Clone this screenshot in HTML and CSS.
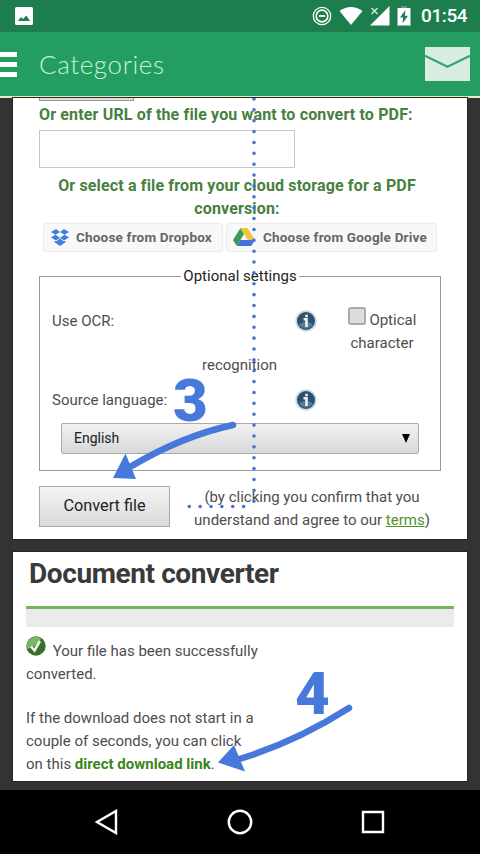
FILE: index.html
```
<!DOCTYPE html>
<html lang="en">
  <head>
    <meta charset="UTF-8" />
    <meta name="viewport" content="width=device-width, initial-scale=1.0" />
    <title>Categories</title>
    <link rel="stylesheet" href="styles.css">
  </head>
  <body>
    <div class="status">
      <svg class="pic" width="18" height="18" viewBox="0 0 18 18">
        <rect width="18" height="18" rx="1.5" fill="#fff" />
        <path d="M3 14l3-4 2.2 2 3-3.500 4 5.500z" fill="#1d7d4d" />
      </svg>
      <div class="status-icons">
        <svg width="20" height="20" viewBox="0 0 20 20" fill="none" stroke="#fff">
          <circle cx="10" cy="10" r="8.700" stroke-width="1.300" />
          <circle cx="10" cy="10" r="5.800" stroke-width="1.700" />
          <path d="M7 10h6" stroke-width="1.900" />
        </svg>
        <svg width="24" height="20" viewBox="0 0 24 20">
          <path d="M.5 5Q12-3 23.500 5L12 19z" fill="#fff" />
        </svg>
        <svg width="20" height="20" viewBox="0 0 20 20">
          <path d="M19.500 0v19.500H0z" fill="#fff" />
          <path d="M0-1h9.500v10H0z" fill="#1d7d4d" />
          <path d="M1.500 2l6 6M7.500 2l-6 6" stroke="#d5e8dd" stroke-width="1.400" />
        </svg>
        <svg width="14" height="20" viewBox="0 0 14 20">
          <path d="M4 0h6v2h-6z" fill="#5ba27d" />
          <path d="M.5 2h13v17.500H.5z" fill="#fff" />
          <path d="M8.500 4L3 11.500h3.200L5.500 17.500 11 9.800H7.800z" fill="#1d7d4d" />
        </svg>
        <span class="clock">01:54</span>
      </div>
    </div>

    <div class="header">
      <div class="menu"><i></i><i></i><i></i></div>
      <h1>Categories</h1>
      <svg class="mail" width="45" height="34" viewBox="0 0 45 34">
        <path d="M0 0h45v34H0z" fill="#d7ede2" />
        <path d="M0 8.800l22.500 11L45 8.800" fill="none" stroke="#3fa170" stroke-width="2.200" />
      </svg>
    </div>

    <div class="content">
      <div class="card upload">
        <div class="browse"></div>
        <p class="label url">Or enter URL of the file you want to convert to PDF:</p>
        <input class="input" type="text" />
        <p class="label cloud">Or select a file from your cloud storage for a PDF<br>conversion:</p>
        <div class="choosers">
          <div class="choose dropbox">
            <svg width="18" height="17" viewBox="0 0 18 17" fill="#3f7fe0">
              <path d="M5 0l4 3-4.500 2.800L0 3zM13 0l5 3-4.500 2.800L9 3zM4.500 5.800L9 8.700 5 11.500 0 8.500zM13.500 5.800L18 8.500l-5 3-4-2.800zM9 9.600l4 2.900 1.500-.8v1.600L9 17l-5.500-3.700v-1.600l1.500.8z" />
            </svg>
            <span>Choose from Dropbox</span>
          </div>
          <div class="choose drive">
            <svg width="22" height="18" viewBox="0 0 22 18">
              <path d="M7.500 0L0 12l3.800 6L11 6z" fill="#3e9b55" />
              <path d="M7.500 0h7L22 12h-7.300z" fill="#eec63c" />
              <path d="M7.300 12H22l-3.800 6H3.800z" fill="#4175dc" />
            </svg>
            <span>Choose from Google Drive</span>
          </div>
        </div>

        <fieldset>
          <legend>Optional settings</legend>
          <div class="row ocr">
            <span class="name">Use OCR:</span>
            <svg class="info" width="22" height="22" viewBox="0 0 22 22">
              <circle cx="11" cy="11" r="10.700" fill="#c9d8e2" />
              <circle cx="11" cy="11" r="9" fill="#2f506c" />
              <path d="M4 14.500a8 8 0 0 0 14 0 10 10 0 0 0-14 0z" fill="#557b98" />
              <path d="M8.500 9.300h3V17M11.500 4.800v2.500" fill="none" stroke="#e8f2f8" stroke-width="2.600" />
            </svg>
            <div class="check"><i class="box"></i> Optical<br>character</div>
          </div>
          <p class="recog">recognition</p>
          <div class="row lang">
            <span class="name">Source language:</span>
            <svg class="info" width="22" height="22" viewBox="0 0 22 22">
              <circle cx="11" cy="11" r="10.700" fill="#c9d8e2" />
              <circle cx="11" cy="11" r="9" fill="#2f506c" />
              <path d="M4 14.500a8 8 0 0 0 14 0 10 10 0 0 0-14 0z" fill="#557b98" />
              <path d="M8.500 9.300h3V17M11.500 4.800v2.500" fill="none" stroke="#e8f2f8" stroke-width="2.600" />
            </svg>
          </div>
          <div class="select">
            <span>English</span>
            <svg width="8" height="9" viewBox="0 0 8 9"><path d="M0 0h8L4 9z" /></svg>
          </div>
        </fieldset>

        <div class="submit">
          <button class="btn">Convert file</button>
          <p>(by clicking you confirm that you<br>understand and agree to our <a>terms</a>)</p>
        </div>

        <!-- step 3 marks drawn over the form -->
        <svg class="marks" width="454" height="441" viewBox="13 98 454 441">
          <path class="dots" d="M254 99V507" />
          <path class="dots" d="M189.300 506.500H250" />
          <path class="line" d="M233 425Q182 436 130 467" />
          <path class="head" d="M125.500 453.500L136 479l-23-1z" />
        </svg>
        <b class="step three">3</b>
      </div>

      <div class="card result">
        <h2>Document converter</h2>
        <div class="bar"></div>
        <p class="done">
          <svg width="20" height="20" viewBox="0 0 20 20">
            <circle cx="10" cy="10" r="9.700" fill="#376f2c" />
            <path d="M1.500 13A9 9 0 0 1 15 2.500Q12 10 1.500 13z" fill="#7cb664" />
            <path d="M5 10.500l3.500 4L14 5" fill="none" stroke="#edf5e8" stroke-width="2.600" />
          </svg>
          Your file has been successfully<br>converted.
        </p>
        <p class="download">If the download does not start in a<br>couple of seconds, you can click<br>on this <a>direct download link</a>.</p>

        <!-- step 4 marks -->
        <svg class="marks" width="454" height="229" viewBox="13 552 454 229">
          <path class="line" d="M349 708Q294 743 236 760" />
          <path class="head" d="M234 745l11 26.500L218 762.500z" />
        </svg>
        <b class="step four">4</b>
      </div>
    </div>

    <div class="nav">
      <svg width="24" height="26" viewBox="0 0 24 26"><path d="M21 2v22L2 13z" /></svg>
      <svg width="26" height="26" viewBox="0 0 26 26"><circle cx="13" cy="13" r="11.200" /></svg>
      <svg width="24" height="24" viewBox="0 0 24 24"><path d="M2 2h20v20H2z" /></svg>
    </div>
  </body>
</html>
```
FILE: styles.css
```
* {
  box-sizing: border-box;
}
body {
  margin: 0;
  width: 480px;
  height: 854px;
  overflow: hidden;
  background-color: #333;
  font-family: Roboto, sans-serif;
  font-size: 15px;
  line-height: 22.7px;
  color: #4d4d4d;
}
p, h1, h2 {
  margin: 0;
  white-space: nowrap;
}
svg {
  display: block;
  flex: none;
}
.status {
  display: flex;
  align-items: center;
  justify-content: space-between;
  height: 32px;
  padding: 0 11px 0 15px;
  background-color: #1d7d4d;
}
.status-icons {
  display: flex;
  align-items: center;
  gap: 7px;
}
.clock {
  width: 48px;
  margin-left: 3px;
  font-size: 19px;
  font-weight: 500;
  letter-spacing: -0.4px;
  color: #fff;
}
.header {
  display: flex;
  align-items: center;
  height: 66px;
  padding-right: 10px;
  background-color: #239d60;
  border-bottom: 2px solid #e2eebc;
}
.menu {
  width: 17px;
  margin-right: 22px;
}
.menu i {
  display: block;
  height: 5px;
  margin: 5px 0;
  background-color: #fff;
}
.header h1 {
  font-family: Lato, sans-serif;
  font-size: 26px;
  font-weight: 300;
  letter-spacing: 0.6px;
  color: #c2f5da;
}
.mail {
  margin-left: auto;
}
.content {
  height: 692px;
}
.card {
  position: relative;
  width: 454px;
  margin: 0 13px;
  background-color: #fff;
  outline: 1px solid #262626;
}
.upload {
  height: 441px;
  padding-left: 26px;
}
.browse {
  width: 95px;
  height: 3px;
  background-color: #ddd;
  border: 1px solid #999;
  border-top: none;
}
.label {
  font-size: 16px;
  font-weight: 700;
  line-height: 23px;
  letter-spacing: 0.15px;
  color: #47803f;
}
.url {
  margin-top: 2px;
}
.input {
  display: block;
  width: 256px;
  height: 38px;
  margin-top: 4px;
  border: 1px solid #c8c8c8;
}
.cloud {
  width: 396px;
  margin-top: 6px;
  text-align: center;
}
.choosers {
  display: flex;
  gap: 5px;
  margin: 4px 0 0 5px;
}
.choose {
  display: flex;
  align-items: center;
  height: 27px;
  padding-bottom: 1px;
  font-size: 13.5px;
  font-weight: 700;
  letter-spacing: 0.2px;
  color: #666;
  white-space: nowrap;
  background-color: #f8f8f8;
  border-radius: 2px;
  box-shadow: 0 0 2px #bbb;
}
.dropbox {
  width: 178px;
  padding-left: 7px;
  gap: 7px;
}
.drive {
  width: 209px;
  padding-left: 6px;
  gap: 8px;
}
fieldset {
  width: 402px;
  min-width: 0;
  height: 206px;
  margin: 14px 0 0;
  padding: 0 12px;
  border: 1px solid #999;
}
legend {
  height: 23px;
  margin: 0 auto;
  padding: 0 2px;
  color: #222;
}
.row {
  display: flex;
}
.name {
  flex: none;
  width: 243px;
}
.ocr {
  margin-top: 22px;
}
.check {
  flex: none;
  width: 100px;
  margin: -3px 0 0 15px;
  text-align: center;
  white-space: nowrap;
}
.box {
  display: inline-block;
  width: 18px;
  height: 18px;
  border: 2px solid #aaa;
  border-radius: 3px;
  background-color: #ddd;
}
.recog {
  margin-left: 150px;
}
.lang {
  margin-top: 12px;
}
.select {
  display: flex;
  align-items: center;
  justify-content: space-between;
  width: 358px;
  height: 31px;
  margin: 11px 0 0 9px;
  padding: 0 8px 0 12px;
  font-size: 14px;
  color: #222;
  border: 1px solid #aaa;
  border-radius: 2px;
  background-image: linear-gradient(#f2f2f2, #d8d8d8);
}
.submit {
  display: flex;
  margin-top: 15px;
}
.btn {
  width: 131px;
  height: 41px;
  padding: 0 0 3px;
  font-family: Roboto, sans-serif;
  font-size: 16.3px;
  color: #222;
  border: 1px solid #aaa;
  background-image: linear-gradient(#f4f4f4, #dadada);
}
.submit p {
  width: 244px;
  margin-left: 20px;
  text-align: center;
}
.submit a {
  color: #4c9427;
  text-decoration: underline;
}
.marks {
  position: absolute;
  top: 0;
  left: 0;
}
.dots {
  fill: none;
  stroke: #4672cf;
  stroke-width: 3.6;
  stroke-linecap: round;
  stroke-dasharray: 0 10.87;
}
.line {
  fill: none;
  stroke: #4679da;
  stroke-width: 6.5;
  stroke-linecap: round;
}
.head {
  fill: #4679da;
}
.step {
  position: absolute;
  font-size: 60px;
  font-weight: 900;
  line-height: 60px;
  color: #4679da;
}
.three {
  top: 273px;
  left: 160px;
}
.four {
  top: 112px;
  left: 282px;
}
.result {
  height: 229px;
  margin-top: 13px;
  padding: 5px 13px 0;
}
.result h2 {
  padding-left: 3px;
  font-size: 28px;
  line-height: 34px;
  letter-spacing: -0.4px;
  color: #3a3a3a;
}
.bar {
  height: 21px;
  margin-top: 15px;
  background-color: #ebebeb;
  border-top: 3px solid #74b35c;
}
.done {
  margin-top: 9px;
}
.done svg {
  display: inline-block;
  margin-right: 3px;
}
.download {
  margin-top: 22px;
}
.download a {
  font-weight: 700;
  color: #3a8520;
}
.nav {
  display: flex;
  align-items: center;
  justify-content: space-between;
  height: 64px;
  padding: 0 95px;
  background-color: #000;
}
.nav svg {
  fill: none;
  stroke: #fff;
  stroke-width: 2.4;
}
```
